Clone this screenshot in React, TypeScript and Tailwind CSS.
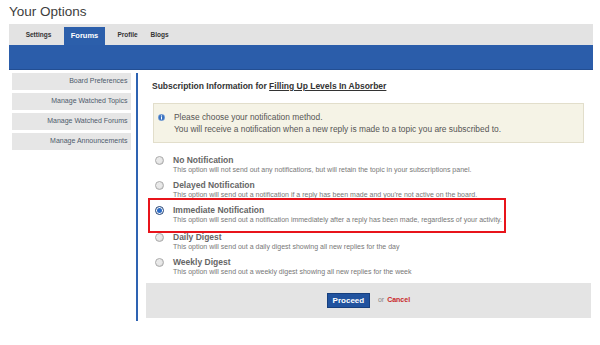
const options = [
  {
    title: "No Notification",
    desc: "This option will not send out any notifications, but will retain the topic in your subscriptions panel.",
  },
  {
    title: "Delayed Notification",
    desc: "This option will send out a notification if a reply has been made and you're not active on the board.",
  },
  {
    title: "Immediate Notification",
    desc: "This option will send out a notification immediately after a reply has been made, regardless of your activity.",
    selected: true,
  },
  {
    title: "Daily Digest",
    desc: "This option will send out a daily digest showing all new replies for the day",
  },
  {
    title: "Weekly Digest",
    desc: "This option will send out a weekly digest showing all new replies for the week",
  },
];

const sideLinks = ["Board Preferences", "Manage Watched Topics", "Manage Watched Forums", "Manage Announcements"];

function Radio({ checked }: { checked?: boolean }) {
  if (checked) {
    return (
      <div className="w-[9px] h-[9px] rounded-full border border-[#1d3f73] bg-white flex items-center justify-center shrink-0">
        <div className="w-[5px] h-[5px] rounded-full bg-[#2a6ac6]" />
      </div>
    );
  }
  return (
    <div className="w-[9px] h-[9px] rounded-full border border-[#a9a9a9] bg-gradient-to-br from-[#f4f4f4] to-[#d2d2d2] flex items-center justify-center shrink-0">
      <div className="w-[5px] h-[5px] rounded-full bg-[#e9e9e9]" />
    </div>
  );
}

function InfoIcon() {
  return (
    <svg width="7" height="7" viewBox="0 0 14 14" className="shrink-0">
      <circle cx="7" cy="7" r="6.5" fill="#3a73c2" stroke="#8fb0dd" strokeWidth="1" />
      <circle cx="7" cy="4" r="1.3" fill="#fff" />
      <rect x="6" y="6" width="2" height="5" fill="#fff" />
    </svg>
  );
}

export default function App() {
  return (
    <div className="w-[600px] h-[345px] bg-white overflow-hidden font-['Liberation_Sans',Arial,sans-serif]">
      {/* Title */}
      <div className="h-[24px] pl-[9px] pt-[2px] text-[13.5px] leading-[20px] text-[#3d3d3d]">Your Options</div>

      {/* Tabs */}
      <div className="ml-[9px] w-[584px] h-[21px] bg-[#e3e3e3] flex items-end pl-[10px]">
        <div className="w-[39px] h-full flex items-center justify-center text-[6.5px] font-bold text-[#333]">Settings</div>
        <div className="ml-[6px] w-[41px] h-[18px] bg-[#2c5fab] flex items-center justify-center text-[7.5px] font-bold text-white">
          Forums
        </div>
        <div className="ml-[5px] w-[35px] h-full flex items-center justify-center text-[6.5px] font-bold text-[#333]">Profile</div>
        <div className="w-[29px] h-full flex items-center justify-center text-[6.5px] font-bold text-[#333]">Blogs</div>
      </div>
      <div className="ml-[9px] w-[584px] h-[25px] bg-[#2b5daa] border-b border-[#234e92]" />

      <div className="flex">
        {/* Sidebar */}
        <div className="pl-[12px] pt-[3px] flex flex-col gap-[3px]">
          {sideLinks.map((l) => (
            <div key={l} className="w-[119px] h-[17px] bg-[#e6e6e6] flex items-center justify-end pr-[3.5px] text-[7px] text-[#4e5b6c]">
              {l}
            </div>
          ))}
        </div>
        <div className="ml-[5px] mt-[3px] w-[2px] h-[248px] bg-[#2e63b2]" />

        {/* Main */}
        <div className="ml-[8px] w-[445px]">
          <div className="h-[32px] leading-[32px] pl-[6px] text-[8.5px] font-bold text-[#333]">
            Subscription Information for <a className="underline text-[#333]">Filling Up Levels In Absorber</a>
          </div>

          <div className="mt-[1px] ml-[7px] w-[431px] h-[40px] bg-[#f5f3e6] border border-[#e2decb] pt-[7px] pl-[4px] flex">
            <div className="w-[16px] h-[12px] flex items-center">
              <InfoIcon />
            </div>
            <div className="text-[8.4px] leading-[12px] text-[#555]">
              <div>Please choose your notification method.</div>
              <div>You will receive a notification when a new reply is made to a topic you are subscribed to.</div>
            </div>
          </div>

          <div className="mt-[12px] flex flex-col">
            {options.map((o, i) => (
              <div key={o.title} className={`relative flex pl-[9px] h-[25px] ${i === 3 ? "mt-[2px]" : ""}`}>
                {o.selected && (
                  <div className="absolute left-[2px] top-[-7px] w-[358px] h-[35px] border-2 border-[#e8141b]" />
                )}
                <div className="h-[10px] flex items-center">
                  <Radio checked={o.selected} />
                </div>
                <div className="ml-[9px]">
                  <div className="text-[8.5px] leading-[10px] font-bold text-[#666]">{o.title}</div>
                  <div className="text-[7px] leading-[9px] text-[#777] whitespace-nowrap">{o.desc}</div>
                </div>
              </div>
            ))}
          </div>

          <div className="mt-[1px] h-[35px] bg-[#e4e4e4] flex items-center justify-center">
            <button className="w-[43px] h-[15px] bg-[#21539f] border border-[#173f7d] text-white text-[8px] font-bold leading-none">
              Proceed
            </button>
            <span className="ml-[8px] text-[7px] text-[#888]">or</span>
            <span className="ml-[3px] text-[7px] font-bold text-[#c8282a]">Cancel</span>
          </div>
        </div>
      </div>
    </div>
  );
}
